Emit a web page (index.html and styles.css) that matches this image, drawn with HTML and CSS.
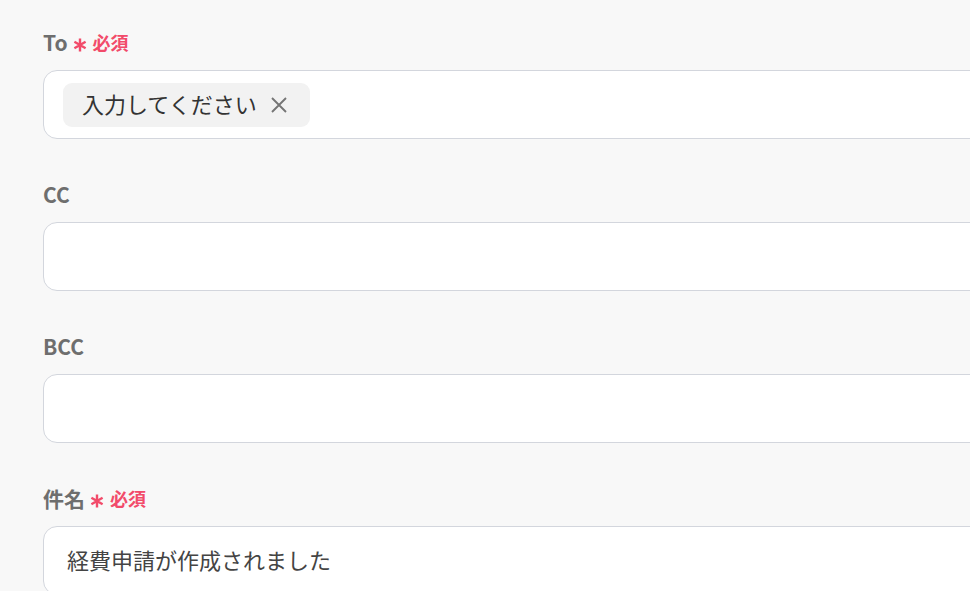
FILE: index.html
```html
<!DOCTYPE html>
<html lang="ja">
<head>
<meta charset="utf-8">
<link rel="stylesheet" href="styles.css">
</head>
<body>
<div class="form">
  <div class="field">
    <div class="label">To<span class="req"><svg class="ast" width="14" height="16" viewBox="0 0 14 16"><path d="M7 1.5 V14.5 M1.4 4.75 L12.6 11.25 M12.6 4.75 L1.4 11.25" stroke="#f24b6a" stroke-width="2.4" fill="none"/></svg>必須</span></div>
    <div class="input">
      <span class="chip"><span class="chip-text">入力してください</span><svg class="x" width="18" height="18" viewBox="0 0 18 18"><path d="M2 2 L16 16 M16 2 L2 16" stroke="#757575" stroke-width="1.9" fill="none"/></svg></span>
    </div>
  </div>
  <div class="field">
    <div class="label">CC</div>
    <div class="input"></div>
  </div>
  <div class="field">
    <div class="label">BCC</div>
    <div class="input"></div>
  </div>
  <div class="field">
    <div class="label">件名<span class="req"><svg class="ast" width="14" height="16" viewBox="0 0 14 16"><path d="M7 1.5 V14.5 M1.4 4.75 L12.6 11.25 M12.6 4.75 L1.4 11.25" stroke="#f24b6a" stroke-width="2.4" fill="none"/></svg>必須</span></div>
    <div class="input"><span class="value">経費申請が作成されました</span></div>
  </div>
</div>
</body>
</html>
```
FILE: styles.css
```css
html, body {
  margin: 0;
  padding: 0;
  background: #f8f8f8;
  overflow: hidden;
  font-family: "Noto Sans CJK JP", "Noto Sans", sans-serif;
}
.form {
  padding: 27px 0 0 43px;
  display: flex;
  flex-direction: column;
  gap: 40px;
}
.field {
  display: flex;
  flex-direction: column;
  gap: 13px;
}
.label {
  height: 30px;
  line-height: 30px;
  font-size: 21px;
  font-weight: 700;
  color: #6e6e6e;
  display: flex;
  align-items: center;
}
.req {
  color: #f24b6a;
  font-size: 18px;
  font-weight: 700;
  display: flex;
  align-items: center;
  margin-left: 5px;
}
.ast {
  display: block;
  margin: 5px 6px 0 0;
}
.input {
  width: 1000px;
  height: 69px;
  box-sizing: border-box;
  border: 1px solid #d3d6dd;
  border-radius: 14px;
  background: #fff;
  display: flex;
  align-items: center;
  padding: 0 19px;
}
.chip {
  height: 44px;
  display: inline-flex;
  align-items: center;
  background: #f2f2f2;
  border-radius: 9px;
  padding: 0 22px 0 19px;
  font-size: 22px;
  color: #333;
  gap: 13px;
}
.chip-text { margin-bottom: 3px; }
.x { display: block; }
.value {
  font-size: 22px;
  color: #444;
  margin: 0 0 4px 4px;
}
```
